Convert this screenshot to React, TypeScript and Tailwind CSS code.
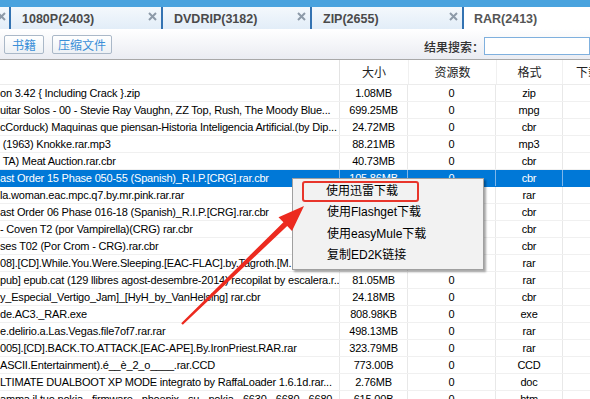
import React from "react";

const latin = { fontFamily: '"Liberation Sans", "Noto Sans CJK SC", sans-serif' };
const cjk = { fontFamily: '"Noto Sans CJK SC", "Liberation Sans", sans-serif' };

type Row = { name: string; size: string; count: string; fmt: string };

// rows 6-10 sit under the context menu, their size/count cells are not visible
const rows: Row[] = [
    { name: "on 3.42 { Including Crack }.zip", size: "1.08MB", count: "0", fmt: "zip" },
    { name: "uitar Solos - 00 - Stevie Ray Vaughn, ZZ Top, Rush, The Moody Blue...", size: "699.25MB", count: "0", fmt: "mpg" },
    { name: "cCorduck) Maquinas que piensan-Historia Inteligencia Artificial.(by Dip...", size: "24.72MB", count: "0", fmt: "cbr" },
    { name: " (1963) Knokke.rar.mp3", size: "88.21MB", count: "0", fmt: "mp3" },
    { name: " TA) Meat Auction.rar.cbr", size: "40.73MB", count: "0", fmt: "cbr" },
    { name: "ast Order 15 Phase 050-55 (Spanish)_R.I.P.[CRG].rar.cbr", size: "105.86MB", count: "0", fmt: "cbr" },
    { name: "la.woman.eac.mpc.q7.by.mr.pink.rar.rar", size: "", count: "", fmt: "rar" },
    { name: "ast Order 06 Phase 016-18 (Spanish)_R.I.P.[CRG].rar.cbr", size: "", count: "", fmt: "cbr" },
    { name: "- Coven T2 (por Vampirella)(CRG) rar.cbr", size: "", count: "", fmt: "cbr" },
    { name: "ses T02 (Por Crom - CRG).rar.cbr", size: "", count: "", fmt: "cbr" },
    { name: "08].[CD].While.You.Were.Sleeping.[EAC-FLAC].by.Tagroth.[M...", size: "", count: "", fmt: "rar" },
    { name: "pub] epub.cat (129 llibres agost-desembre-2014) recopilat by escalera.r...", size: "81.05MB", count: "0", fmt: "rar" },
    { name: "y_Especial_Vertigo_Jam]_[HyH_by_VanHelsing] rar.cbr", size: "24.18MB", count: "0", fmt: "cbr" },
    { name: "de.AC3._RAR.exe", size: "808.98KB", count: "0", fmt: "exe" },
    { name: "e.delirio.a.Las.Vegas.file7of7.rar.rar", size: "498.13MB", count: "0", fmt: "rar" },
    { name: "005].[CD].BACK.TO.ATTACK.[EAC-APE].By.IronPriest.RAR.rar", size: "323.79MB", count: "0", fmt: "rar" },
    { name: "ASCII.Entertainment).é__è_2_o____.rar.CCD", size: "773.00B", count: "0", fmt: "CCD" },
    { name: "LTIMATE DUALBOOT XP MODE integrato by RaffaLoader 1.6.1d.rar...", size: "2.76MB", count: "0", fmt: "doc" },
    { name: "amma il tuo nokia - firmware - phoenix - su - nokia - 6630 - 6680 - 6680...", size: "615.00B", count: "0", fmt: "htm" },
];

const tabs = [
    { label: "1080P(2403)", w: "w-[152px]" },
    { label: "DVDRIP(3182)", w: "w-[149px]" },
    { label: "ZIP(2655)", w: "w-[152px]" },
];

function CloseX() {
    return (
        <svg width="9" height="9" viewBox="0 0 9 9" className="absolute right-[4px] top-[5px]">
            <path d="M1 1L8 8M8 1L1 8" stroke="#8d9aa8" strokeWidth="2" />
        </svg>
    );
}

export default function App() {
    return (
        <div className="relative w-[590px] h-[399px] overflow-hidden bg-white" style={latin}>
            {/* tab strip */}
            <div className="flex h-[29px] pt-[7px] bg-[#4aa3de]">
                <div className="relative w-[9px] bg-linear-to-b from-[#f4f8fc] to-[#e2edf8]">
                    <svg width="9" height="9" viewBox="0 0 9 9" className="absolute -left-[3px] top-[5px]">
                        <path d="M1 1L8 8M8 1L1 8" stroke="#8d9aa8" strokeWidth="2" />
                    </svg>
                </div>
                {tabs.map((t) => (
                    <div
                        key={t.label}
                        className={`relative ${t.w} border-l-2 border-[#3373b2] bg-linear-to-b from-[#f4f8fc] to-[#e2edf8] pl-[11px] pt-[5px] text-[12.5px] font-bold leading-[14px] text-[#4a4a4a]`}
                    >
                        {t.label}
                        <CloseX />
                    </div>
                ))}
                <div className="flex-1 border-l-2 border-[#3373b2] bg-white pl-[10px] pt-[5px] text-[12.5px] font-bold leading-[14px] text-[#555]">
                    RAR(2413)
                </div>
            </div>

            {/* toolbar */}
            <div className="flex items-center h-[31px] border-b border-[#a8a8a8] bg-linear-to-b from-white to-[#eaecf2] pl-[4px]">
                <div className="flex gap-[8px] mt-[1px]">
                    <div className="h-[19px] px-[7px] rounded-[2px] border border-[#aab8c8] bg-linear-to-b from-white to-[#edf1f5] text-[12px] leading-[17px] text-[#3a8fd8]" style={cjk}>
                        书籍
                    </div>
                    <div className="h-[19px] px-[5px] rounded-[2px] border border-[#aab8c8] bg-linear-to-b from-white to-[#edf1f5] text-[12px] leading-[17px] text-[#3a8fd8]" style={cjk}>
                        压缩文件
                    </div>
                </div>
                <div className="ml-auto flex items-center mt-[4px]">
                    <span className="text-[12px] font-medium text-[#333] leading-[17px]" style={cjk}>
                        结果搜索：
                    </span>
                    <div className="w-[106px] h-[18px] border border-[#7fb0de] bg-white" />
                </div>
            </div>

            {/* table header */}
            <div className="flex h-[25px] border-b border-[#ececec] text-[12px] text-[#222]" style={cjk}>
                <div className="w-[340px] shrink-0 border-r border-[#e3e3e3]" />
                <div className="w-[68px] shrink-0 flex items-center justify-center">大小</div>
                <div className="w-[88px] shrink-0 flex items-center justify-center border-l border-[#f0f0f0]">资源数</div>
                <div className="w-[67px] shrink-0 flex items-center justify-center border-l border-[#f0f0f0] border-r border-[#e3e3e3]">格式</div>
                <div className="flex-1 flex items-center pl-[13px] whitespace-nowrap overflow-hidden">下载</div>
            </div>

            {/* rows */}
            <div className="text-[11px] tracking-[-0.2px] leading-[16px]">
                {rows.map((r, i) => {
                    const sel = i === 5;
                    const line = sel ? "border-[#7fb6ea]" : "border-[#e8e8e8]";
                    return (
                        <div
                            key={i}
                            className={`flex h-[17px] border-b ${sel ? "bg-[#0078d7] text-white border-[#0078d7]" : "text-black border-[#f0f0f0]"}`}
                        >
                            <div className={`w-[340px] shrink-0 overflow-hidden whitespace-pre border-r ${line}`}>{r.name}</div>
                            <div className={`w-[68px] shrink-0 text-center border-r ${line}`}>{r.size}</div>
                            <div className={`w-[88px] shrink-0 text-center border-r ${line}`}>{r.count}</div>
                            <div className={`w-[67px] shrink-0 text-center border-r ${line}`}>{r.fmt}</div>
                            <div className="flex-1" />
                        </div>
                    );
                })}
            </div>

            {/* context menu */}
            <div
                className="absolute left-[292px] top-[178px] w-[192px] h-[92px] border border-[#a0a0a0] bg-[#f2f2f2] pt-[2px] shadow-[2px_2px_2px_rgba(0,0,0,0.35)] text-[12px] text-black"
                style={latin}
            >
                <div className="ml-[9px] w-[117px] h-[21px] rounded-[3px] border-[2.5px] border-[#e8352b] pl-[22px] leading-[16px]">
                    使用迅雷下载
                </div>
                <div className="h-[21px] pl-[34px] leading-[21px]">使用Flashget下载</div>
                <div className="h-[22px] pl-[34px] leading-[22px]">使用easyMule下载</div>
                <div className="h-[21px] pl-[34px] leading-[21px]">复制ED2K链接</div>
            </div>

            {/* red arrow annotation */}
            <svg className="absolute left-0 top-0 pointer-events-none" width="590" height="399" viewBox="0 0 590 399">
                <polygon
                    points="181.2,323.2 283.4,222.2 278.5,217.2 304,206 292,231 287.2,226 182.8,324.8"
                    fill="#ec2a1f"
                />
            </svg>
        </div>
    );
}
